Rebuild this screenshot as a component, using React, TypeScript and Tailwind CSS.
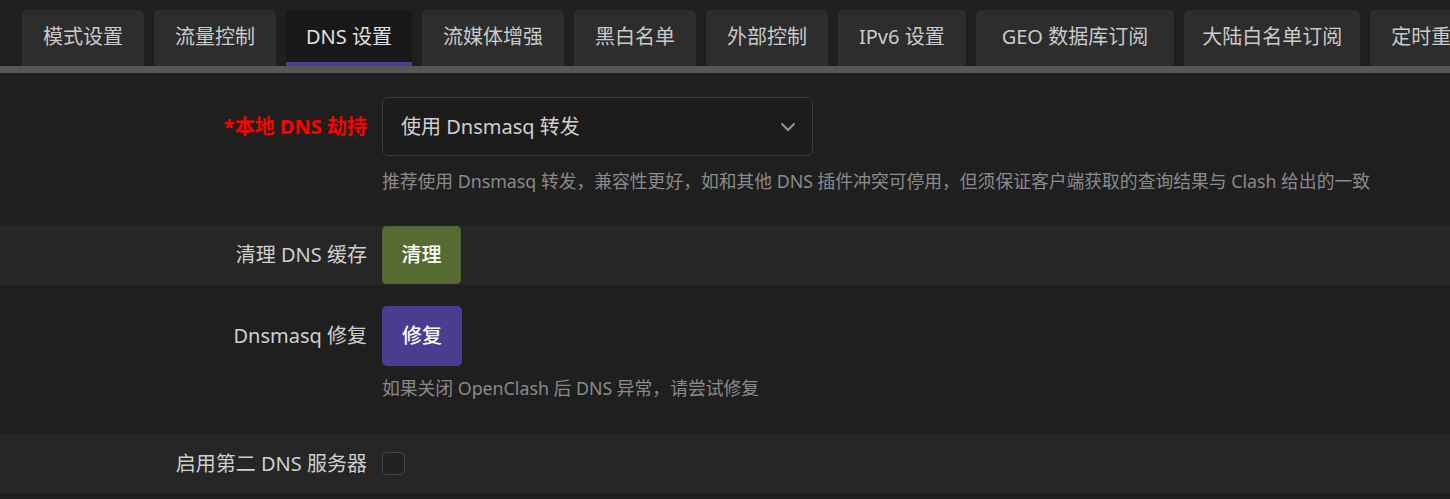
import React from "react";

const tabs = [
  "模式设置",
  "流量控制",
  "DNS 设置",
  "流媒体增强",
  "黑白名单",
  "外部控制",
  "IPv6 设置",
  "GEO 数据库订阅",
  "大陆白名单订阅",
  "定时重启",
];

// per-tab horizontal padding, tuned to the reference widths
const tabPad = [
  "px-[21px]",
  "px-[21px]",
  "px-[20px]",
  "px-[21px]",
  "px-[21px]",
  "px-[21px]",
  "px-[21px]",
  "px-[26px]",
  "px-[18px]",
  "px-[21px]",
];

const font = "font-['Noto_Sans','Noto_Sans_CJK_SC',sans-serif]";

function Label({ children, red }: { children: React.ReactNode; red?: boolean }) {
  return (
    <div
      className={`w-[367px] shrink-0 text-right text-[20px] leading-none whitespace-nowrap ${
        red ? "text-[#ff0000] font-bold" : "text-[#cfcfcf]"
      }`}
    >
      {children}
    </div>
  );
}

export default function App() {
  return (
    <div className={`w-[1450px] h-[499px] overflow-hidden bg-[#1f1f1f] ${font}`}>
      {/* Tabs */}
      <div className="flex gap-[10px] pl-[22px] pt-[10px] overflow-hidden whitespace-nowrap">
        {tabs.map((t, i) => (
          <div
            key={t}
            className={`shrink-0 h-[56px] rounded-t-[5px] flex items-center text-[20px] ${tabPad[i]} ${
              i === 2
                ? "bg-[#181818] text-[#e0e0e0] border-b-4 border-[#4c3f91] pt-[4px]"
                : "bg-[#2d2d2d] text-[#cacaca]"
            }`}
          >
            <span className="-mt-[2px]">{t}</span>
          </div>
        ))}
      </div>
      <div className="h-[7px] bg-[#575757]" />

      {/* Local DNS hijack */}
      <div className="pt-[24px] pb-[32px]">
        <div className="flex items-center gap-[15px]">
          <Label red>*本地 DNS 劫持</Label>
          <div className="w-[431px] h-[59px] rounded-[6px] border border-[#3b3b3b] bg-[#1c1c1c] flex items-center justify-between pl-[18px] pr-[16px]">
            <span className="text-[20px] text-[#d0d0d0]">使用 Dnsmasq 转发</span>
            <svg width="16" height="10" viewBox="0 0 16 10" fill="none">
              <path d="M1.5 1.5 8 8l6.5-6.5" stroke="#8a93a3" strokeWidth="2" />
            </svg>
          </div>
        </div>
        <div className="ml-[382px] mt-[13px] text-[17.8px] leading-[24px] text-[#8a8a8a] whitespace-nowrap">
          推荐使用 Dnsmasq 转发，兼容性更好，如和其他 DNS 插件冲突可停用，但须保证客户端获取的查询结果与 Clash 给出的一致
        </div>
      </div>

      {/* Flush DNS cache */}
      <div className="h-[60px] bg-[#262626] flex items-center gap-[15px]">
        <Label>清理 DNS 缓存</Label>
        <button className="w-[79px] h-[58px] rounded-[4px] bg-[#556b2f] border border-[#4f6330] text-white text-[20px] font-medium">
          清理
        </button>
      </div>

      {/* Dnsmasq repair */}
      <div className="pt-[21px] pb-[34px]">
        <div className="flex items-center gap-[15px]">
          <Label>Dnsmasq 修复</Label>
          <button className="w-[80px] h-[60px] rounded-[5px] bg-[#4a3d8f] text-white text-[20px] font-medium">
            修复
          </button>
        </div>
        <div className="ml-[382px] mt-[10px] text-[17.8px] leading-[24px] text-[#8a8a8a] whitespace-nowrap">
          如果关闭 OpenClash 后 DNS 异常，请尝试修复
        </div>
      </div>

      {/* Secondary DNS */}
      <div className="h-[59px] bg-[#262626] flex items-center gap-[15px]">
        <Label>启用第二 DNS 服务器</Label>
        <div className="w-[23px] h-[23px] rounded-[5px] border border-[#464646] bg-[#222]" />
      </div>
    </div>
  );
}
